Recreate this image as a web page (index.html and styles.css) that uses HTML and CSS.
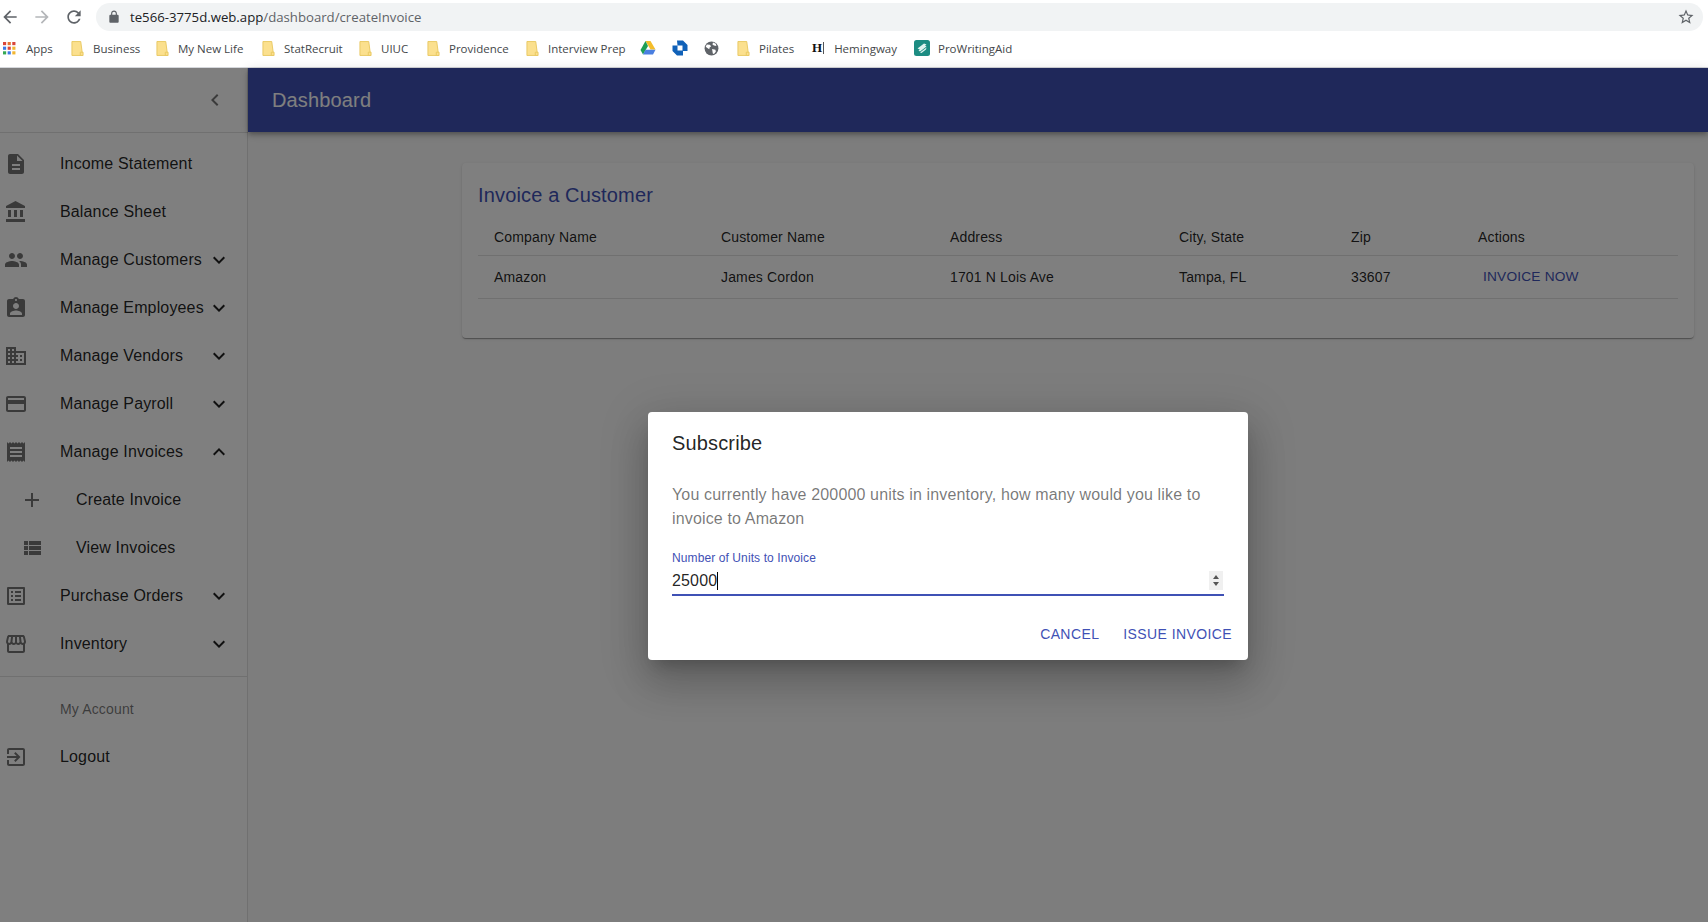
FILE: index.html
```html
<!DOCTYPE html>
<html lang="en">
<head>
    <meta charset="UTF-8">
    <title>Dashboard</title>
    <link rel="stylesheet" href="styles.css">
</head>
<body>
    <svg class="sprite" xmlns="http://www.w3.org/2000/svg">
        <symbol id="i-back" viewBox="0 0 24 24"><path d="M20 11H7.83l5.59-5.59L12 4l-8 8 8 8 1.41-1.41L7.83 13H20v-2z"/></symbol>
        <symbol id="i-forward" viewBox="0 0 24 24"><path d="M12 4l-1.41 1.41L16.17 11H4v2h12.17l-5.58 5.59L12 20l8-8z"/></symbol>
        <symbol id="i-reload" viewBox="0 0 24 24"><path d="M17.65 6.35C16.2 4.9 14.21 4 12 4c-4.42 0-7.99 3.58-7.99 8s3.57 8 7.99 8c3.73 0 6.84-2.55 7.73-6h-2.08c-.82 2.33-3.04 4-5.65 4-3.31 0-6-2.69-6-6s2.69-6 6-6c1.66 0 3.14.69 4.22 1.78L13 11h7V4l-2.35 2.35z"/></symbol>
        <symbol id="i-lock" viewBox="0 0 24 24"><path d="M18 8h-1V6c0-2.76-2.24-5-5-5S7 3.24 7 6v2H6c-1.1 0-2 .9-2 2v10c0 1.1.9 2 2 2h12c1.1 0 2-.9 2-2V10c0-1.1-.9-2-2-2zM9 6c0-1.66 1.34-3 3-3s3 1.34 3 3v2H9V6z"/></symbol>
        <symbol id="i-star" viewBox="0 0 24 24"><path d="M22 9.24l-7.19-.62L12 2 9.19 8.63 2 9.24l5.46 4.73L5.82 21 12 17.27 18.18 21l-1.63-7.03L22 9.24zM12 15.4l-3.76 2.27 1-4.28-3.32-2.88 4.38-.38L12 6.1l1.71 4.04 4.38.38-3.32 2.88 1 4.28L12 15.4z"/></symbol>
        <symbol id="i-folder" viewBox="0 0 14 18"><path d="M1 1.5h9.5L12.5 16.5H1z" fill="#fbe08e" stroke="#e8c860"/><path d="M10 13h3v3.5h-3z" fill="#fbe08e" stroke="#e8c860"/></symbol>
        <symbol id="i-statement" viewBox="0 0 24 24"><path d="M14 2H6c-1.1 0-1.99.9-1.99 2L4 20c0 1.1.89 2 1.99 2H18c1.1 0 2-.9 2-2V8l-6-6zm2 16H8v-2h8v2zm0-4H8v-2h8v2zm-3-5V3.5L18.5 9H13z"/></symbol>
        <symbol id="i-bank" viewBox="0 0 24 24"><path d="M4 10v7h3v-7H4zm6 0v7h3v-7h-3zM2 22h19v-3H2v3zm14-12v7h3v-7h-3zm-4.5-9L2 6v2h19V6l-9.5-5z"/></symbol>
        <symbol id="i-people" viewBox="0 0 24 24"><path d="M16 11c1.66 0 2.99-1.34 2.99-3S17.66 5 16 5c-1.66 0-3 1.34-3 3s1.34 3 3 3zm-8 0c1.66 0 2.99-1.34 2.99-3S9.66 5 8 5C6.34 5 5 6.34 5 8s1.34 3 3 3zm0 2c-2.33 0-7 1.17-7 3.5V19h14v-2.5c0-2.33-4.67-3.5-7-3.5zm8 0c-.29 0-.62.02-.97.05 1.16.84 1.97 1.97 1.97 3.45V19h6v-2.5c0-2.33-4.67-3.5-7-3.5z"/></symbol>
        <symbol id="i-badge" viewBox="0 0 24 24"><path d="M19 3h-4.18C14.4 1.84 13.3 1 12 1c-1.3 0-2.4.84-2.82 2H5c-1.1 0-2 .9-2 2v14c0 1.1.9 2 2 2h14c1.1 0 2-.9 2-2V5c0-1.1-.9-2-2-2zm-7 0c.55 0 1 .45 1 1s-.45 1-1 1-1-.45-1-1 .45-1 1-1zm0 4c1.66 0 3 1.34 3 3s-1.34 3-3 3-3-1.34-3-3 1.34-3 3-3zm6 12H6v-1.4c0-2 4-3.1 6-3.1s6 1.1 6 3.1V19z"/></symbol>
        <symbol id="i-business" viewBox="0 0 24 24"><path d="M12 7V3H2v18h20V7H12zM6 19H4v-2h2v2zm0-4H4v-2h2v2zm0-4H4V9h2v2zm0-4H4V5h2v2zm4 12H8v-2h2v2zm0-4H8v-2h2v2zm0-4H8V9h2v2zm0-4H8V5h2v2zm10 12h-8v-2h2v-2h-2v-2h2v-2h-2V9h8v10zm-2-8h-2v2h2v-2zm0 4h-2v2h2v-2z"/></symbol>
        <symbol id="i-card" viewBox="0 0 24 24"><path d="M20 4H4c-1.11 0-1.99.89-1.99 2L2 18c0 1.11.89 2 2 2h16c1.11 0 2-.89 2-2V6c0-1.11-.89-2-2-2zm0 14H4v-6h16v6zm0-10H4V6h16v2z"/></symbol>
        <symbol id="i-receipt" viewBox="0 0 24 24"><path d="M18 17H6v-2h12v2zm0-4H6v-2h12v2zm0-4H6V7h12v2zM3 22l1.5-1.5L6 22l1.5-1.5L9 22l1.5-1.5L12 22l1.5-1.5L15 22l1.5-1.5L18 22l1.5-1.5L21 22V2l-1.5 1.5L18 2l-1.5 1.5L15 2l-1.5 1.5L12 2l-1.5 1.5L9 2 7.5 3.5 6 2 4.5 3.5 3 2v20z"/></symbol>
        <symbol id="i-add" viewBox="0 0 24 24"><path d="M19 13h-6v6h-2v-6H5v-2h6V5h2v6h6v2z"/></symbol>
        <symbol id="i-viewlist" viewBox="0 0 24 24"><path d="M4 14h4v-4H4v4zm0 5h4v-4H4v4zM4 9h4V5H4v4zm5 5h12v-4H9v4zm0 5h12v-4H9v4zM9 5v4h12V5H9z"/></symbol>
        <symbol id="i-listalt" viewBox="0 0 24 24"><path d="M19 5v14H5V5h14m1.1-2H3.9c-.5 0-.9.4-.9.9v16.2c0 .4.4.9.9.9h16.2c.4 0 .9-.5.9-.9V3.9c0-.5-.5-.9-.9-.9zM11 7h6v2h-6V7zm0 4h6v2h-6v-2zm0 4h6v2h-6zM7 7h2v2H7zm0 4h2v2H7zm0 4h2v2H7z"/></symbol>
        <symbol id="i-store" viewBox="0 0 24 24"><path d="M21.9 8.89l-1.05-4.37c-.22-.9-1-1.52-1.91-1.52H5.05c-.9 0-1.69.63-1.9 1.52L2.1 8.89c-.24 1.02-.02 2.06.62 2.88.08.11.19.19.28.29V19c0 1.1.9 2 2 2h14c1.1 0 2-.9 2-2v-6.94c.09-.09.2-.18.28-.28.64-.82.87-1.87.62-2.89zm-2.99-3.9l1.05 4.37c.1.42.01.84-.25 1.17-.14.18-.44.47-.94.47-.61 0-1.14-.49-1.21-1.14L16.98 5l1.93-.01zM13 5h1.96l.54 4.52c.05.39-.07.78-.33 1.07-.22.26-.54.41-.95.41-.67 0-1.22-.59-1.22-1.31V5zM8.49 9.52L9.04 5H11v4.69c0 .72-.55 1.31-1.29 1.31-.34 0-.65-.15-.89-.41-.25-.29-.37-.68-.33-1.07zm-4.45-.16L5.05 5h1.97l-.58 4.86c-.08.65-.6 1.14-1.21 1.14-.49 0-.8-.29-.93-.47-.27-.32-.36-.75-.26-1.17zM5 19v-6.03c.08.01.15.03.23.03.87 0 1.66-.36 2.24-.95.6.6 1.4.95 2.31.95.87 0 1.65-.36 2.23-.93.59.57 1.39.93 2.29.93.84 0 1.64-.35 2.24-.95.58.59 1.37.95 2.24.95.08 0 .15-.02.23-.03V19H5z"/></symbol>
        <symbol id="i-exit" viewBox="0 0 24 24"><path d="M10.09 15.59L11.5 17l5-5-5-5-1.41 1.41L12.67 11H3v2h9.67l-2.58 2.59zM19 3H5c-1.11 0-2 .9-2 2v4h2V5h14v14H5v-4H3v4c0 1.1.89 2 2 2h14c1.1 0 2-.9 2-2V5c0-1.1-.9-2-2-2z"/></symbol>
        <symbol id="i-more" viewBox="0 0 24 24"><path d="M16.59 8.59L12 13.17 7.41 8.59 6 10l6 6 6-6z"/></symbol>
        <symbol id="i-less" viewBox="0 0 24 24"><path d="M12 8l-6 6 1.41 1.41L12 10.83l4.59 4.58L18 14z"/></symbol>
        <symbol id="i-left" viewBox="0 0 24 24"><path d="M15.41 7.41L14 6l-6 6 6 6 1.41-1.41L10.83 12z"/></symbol>
    </svg>

    <div class="browser">
        <div class="addressrow">
            <svg class="nav-icon"><use href="#i-back"/></svg>
            <svg class="nav-icon faded"><use href="#i-forward"/></svg>
            <svg class="nav-icon"><use href="#i-reload"/></svg>
            <div class="omnibox">
                <svg class="lock"><use href="#i-lock"/></svg>
                <span class="url">te566-3775d.web.app<span class="url-path">/dashboard/createInvoice</span></span>
                <svg class="star"><use href="#i-star"/></svg>
            </div>
        </div>
        <div class="bookmarks">
            <span class="bm apps">
                <svg class="apps-grid" viewBox="0 0 14 14">
                    <rect x="0" y="0" width="3.4" height="3.4" fill="#d9453a"/><rect x="5" y="0" width="3.4" height="3.4" fill="#e5732f"/><rect x="10" y="0" width="3.4" height="3.4" fill="#d9453a"/>
                    <rect x="0" y="5" width="3.4" height="3.4" fill="#3b78e7"/><rect x="5" y="5" width="3.4" height="3.4" fill="#d9453a"/><rect x="10" y="5" width="3.4" height="3.4" fill="#f2b632"/>
                    <rect x="0" y="10" width="3.4" height="3.4" fill="#34a853"/><rect x="5" y="10" width="3.4" height="3.4" fill="#3b78e7"/><rect x="10" y="10" width="3.4" height="3.4" fill="#f2b632"/>
                </svg>Apps</span>
            <span class="bm w-business"><svg class="folder"><use href="#i-folder"/></svg>Business</span>
            <span class="bm w-life"><svg class="folder"><use href="#i-folder"/></svg>My New Life</span>
            <span class="bm w-stat"><svg class="folder"><use href="#i-folder"/></svg>StatRecruit</span>
            <span class="bm w-uiuc"><svg class="folder"><use href="#i-folder"/></svg>UIUC</span>
            <span class="bm w-prov"><svg class="folder"><use href="#i-folder"/></svg>Providence</span>
            <span class="bm w-prep"><svg class="folder"><use href="#i-folder"/></svg>Interview Prep</span>
            <svg class="favicon" viewBox="0 0 16 16"><path d="M5.5 1h5l5 8.5h-5z" fill="#f4bd2a"/><path d="M5.5 1L.5 10l2.5 4.5L8 6z" fill="#1e9e54"/><path d="M5.5 9.8h10L13 14.5H3z" fill="#4a7fe0"/></svg>
            <svg class="favicon" viewBox="0 0 16 16"><path d="M5 .5h6L15.5 5v6H10.5V5.5H5.5zM.5 5.5H5.5V10.5H11V15.5H5L.5 11z" fill="#1061b8"/></svg>
            <svg class="favicon globe" viewBox="0 0 16 16"><circle cx="8" cy="8" r="7.4" fill="#5f6368"/><path d="M3 3.6l3.2.4 1.4 1.6-1.6 1.4-.4 1.8L3.2 7.2 1.8 6.2zM9.6 1.6l3 1.4.6 2.4-2.6-.6-1.6-1.2zM8.6 8.6l3.6.6.4 2.2-2 2.4-1.2-.4-.4-2.6z" fill="#fff"/></svg>
            <span class="bm w-pilates"><svg class="folder"><use href="#i-folder"/></svg>Pilates</span>
            <span class="bm w-hem"><span class="h-mark">H</span><span class="h-bar"></span>Hemingway</span>
            <span class="bm w-pwa"><svg class="pwa" viewBox="0 0 16 16"><rect width="16" height="16" rx="2.5" fill="#1c8c82"/><path d="M3.5 8.5L10 3.5l2.5 1-6.5 5zM4.5 10.5L11 5.5l1.5 1-6.5 5zM6 12.5l6.5-5-.5 2-4.5 3.5z" fill="#dff3ef"/></svg>ProWritingAid</span>
        </div>
    </div>

    <div class="app">
        <nav class="sidebar">
            <div class="sidebar-top">
                <svg class="collapse"><use href="#i-left"/></svg>
            </div>
            <ul class="menu">
                <li class="menu-item"><svg class="menu-icon"><use href="#i-statement"/></svg>Income Statement</li>
                <li class="menu-item"><svg class="menu-icon"><use href="#i-bank"/></svg>Balance Sheet</li>
                <li class="menu-item"><svg class="menu-icon"><use href="#i-people"/></svg>Manage Customers<svg class="caret"><use href="#i-more"/></svg></li>
                <li class="menu-item"><svg class="menu-icon"><use href="#i-badge"/></svg>Manage Employees<svg class="caret"><use href="#i-more"/></svg></li>
                <li class="menu-item"><svg class="menu-icon"><use href="#i-business"/></svg>Manage Vendors<svg class="caret"><use href="#i-more"/></svg></li>
                <li class="menu-item"><svg class="menu-icon"><use href="#i-card"/></svg>Manage Payroll<svg class="caret"><use href="#i-more"/></svg></li>
                <li class="menu-item"><svg class="menu-icon"><use href="#i-receipt"/></svg>Manage Invoices<svg class="caret"><use href="#i-less"/></svg></li>
                <li class="menu-item nested"><svg class="menu-icon"><use href="#i-add"/></svg>Create Invoice</li>
                <li class="menu-item nested"><svg class="menu-icon"><use href="#i-viewlist"/></svg>View Invoices</li>
                <li class="menu-item"><svg class="menu-icon"><use href="#i-listalt"/></svg>Purchase Orders<svg class="caret"><use href="#i-more"/></svg></li>
                <li class="menu-item"><svg class="menu-icon"><use href="#i-store"/></svg>Inventory<svg class="caret"><use href="#i-more"/></svg></li>
            </ul>
            <div class="menu-divider"></div>
            <div class="menu-heading">My Account</div>
            <ul class="menu">
                <li class="menu-item"><svg class="menu-icon"><use href="#i-exit"/></svg>Logout</li>
            </ul>
        </nav>
        <div class="content">
            <header class="appbar">Dashboard</header>
            <main class="main">
                <section class="card">
                    <h2 class="card-title">Invoice a Customer</h2>
                    <table class="invoice-table">
                        <thead>
                            <tr>
                                <th class="col-company">Company Name</th>
                                <th class="col-customer">Customer Name</th>
                                <th class="col-address">Address</th>
                                <th class="col-city">City, State</th>
                                <th class="col-zip">Zip</th>
                                <th>Actions</th>
                            </tr>
                        </thead>
                        <tbody>
                            <tr>
                                <td>Amazon</td>
                                <td>James Cordon</td>
                                <td>1701 N Lois Ave</td>
                                <td>Tampa, FL</td>
                                <td>33607</td>
                                <td><a class="invoice-link">INVOICE NOW</a></td>
                            </tr>
                        </tbody>
                    </table>
                </section>
            </main>
        </div>

        <div class="backdrop"></div>
        <div class="dialog">
            <h2 class="dialog-title">Subscribe</h2>
            <p class="dialog-text">You currently have 200000 units in inventory, how many would you like to invoice to Amazon</p>
            <label class="field-label">Number of Units to Invoice</label>
            <div class="field">
                <span class="field-value">25000</span><span class="text-caret"></span>
                <span class="spinner"><i class="spin-up"></i><i class="spin-down"></i></span>
            </div>
            <div class="dialog-actions">
                <a class="dialog-btn">CANCEL</a>
                <a class="dialog-btn">ISSUE INVOICE</a>
            </div>
        </div>
    </div>
</body>
</html>
```

FILE: styles.css
```css
* {
    box-sizing: border-box;
}

html, body {
    height: 100%;
}

body {
    margin: 0;
    display: flex;
    flex-direction: column;
    font-family: 'Liberation Sans', Arial, sans-serif;
    letter-spacing: 0.15px;
    color: rgba(0, 0, 0, 0.87);
    background: #fafafa;
    overflow: hidden;
}

.sprite {
    display: none;
}

/* browser chrome */
.browser {
    height: 68px;
    background: #fff;
    border-bottom: 1px solid #d5d7db;
    letter-spacing: normal;
    flex: none;
}

.addressrow {
    height: 33px;
    padding: 3px 5px 0 0;
    display: flex;
    align-items: flex-start;
}

.nav-icon {
    width: 20px;
    height: 20px;
    margin: 4px 0 0 0;
    fill: #5f6368;
    flex: none;
}

.nav-icon:nth-child(2) {
    margin-left: 12px;
}

.nav-icon:nth-child(3) {
    margin-left: 12px;
    margin-right: 12px;
}

.nav-icon.faded {
    fill: #b4b6b9;
}

.omnibox {
    flex: 1;
    height: 28px;
    border-radius: 14px;
    background: #f1f3f4;
    display: flex;
    align-items: center;
    padding: 0 8px 0 11px;
}

.lock {
    width: 14px;
    height: 14px;
    fill: #5f6368;
    margin-right: 9px;
}

.url {
    font-family: 'Open Sans', sans-serif;
    font-size: 13.2px;
    color: #202124;
    flex: 1;
}

.url-path {
    color: #5f6368;
}

.star {
    width: 18px;
    height: 18px;
    fill: #5f6368;
}

.bookmarks {
    height: 30px;
    display: flex;
    align-items: center;
    font-family: 'Open Sans', sans-serif;
    font-size: 11.5px;
    color: #44474a;
    padding-left: 3px;
}

.bm {
    display: flex;
    align-items: center;
    flex: none;
}

.apps-grid {
    width: 13px;
    height: 13px;
    margin-right: 10px;
}

.apps {
    width: 68px;
}

.folder {
    width: 13px;
    height: 17px;
    margin-right: 9px;
}

.w-business { width: 85px; }
.w-life { width: 106px; }
.w-stat { width: 97px; }
.w-uiuc { width: 68px; }
.w-prov { width: 99px; }
.w-prep { width: 114px; }

.favicon {
    width: 16px;
    height: 16px;
    margin-right: 16px;
    flex: none;
}

.favicon.globe {
    width: 15px;
    height: 15px;
    margin-right: 18px;
}

.w-pilates { width: 75px; }
.w-hem { width: 102px; }

.h-mark {
    font-family: 'Liberation Serif', serif;
    font-weight: bold;
    font-size: 13px;
    color: #111;
}

.h-bar {
    width: 1px;
    height: 12px;
    background: #555;
    margin: 0 10px 0 1px;
}

.pwa {
    width: 16px;
    height: 16px;
    margin-right: 8px;
}

/* app */
.app {
    flex: 1;
    position: relative;
    display: flex;
    min-height: 0;
}

.sidebar {
    width: 248px;
    flex: none;
    background: #fff;
    border-right: 1px solid rgba(0, 0, 0, 0.12);
}

.sidebar-top {
    height: 65px;
    border-bottom: 1px solid rgba(0, 0, 0, 0.12);
    display: flex;
    align-items: center;
    justify-content: flex-end;
    padding-right: 21px;
    margin-right: -1px;
}

.collapse {
    width: 24px;
    height: 24px;
    fill: rgba(0, 0, 0, 0.54);
}

.menu {
    list-style: none;
    margin: 0;
    padding: 7px 0 0;
}

.menu-item {
    height: 48px;
    display: flex;
    align-items: center;
    padding-left: 4px;
    font-size: 16px;
    position: relative;
}

.menu-icon {
    width: 24px;
    height: 24px;
    margin-right: 32px;
    fill: rgba(0, 0, 0, 0.54);
    flex: none;
}

.menu-item.nested {
    padding-left: 20px;
}

.caret {
    width: 24px;
    height: 24px;
    fill: rgba(0, 0, 0, 0.87);
    margin-left: auto;
    margin-right: 16px;
}

.menu-divider {
    height: 1px;
    background: rgba(0, 0, 0, 0.12);
    margin-top: 8px;
}

.menu-heading {
    height: 48px;
    margin-top: 8px;
    padding-left: 60px;
    font-size: 14px;
    line-height: 48px;
    color: rgba(0, 0, 0, 0.54);
}

.sidebar .menu-heading + .menu {
    padding-top: 0;
}

.content {
    flex: 1;
    min-width: 0;
    display: flex;
    flex-direction: column;
}

.appbar {
    height: 64px;
    background: #3f51b5;
    color: #fff;
    font-size: 20px;
    line-height: 64px;
    padding-left: 24px;
    box-shadow: 0 2px 4px -1px rgba(0, 0, 0, 0.2), 0 4px 5px 0 rgba(0, 0, 0, 0.14), 0 1px 10px 0 rgba(0, 0, 0, 0.12);
    flex: none;
}

.main {
    flex: 1;
    padding: 31px 14px 0 214px;
}

.card {
    height: 175px;
    background: #fff;
    border-radius: 4px;
    padding: 16px;
    box-shadow: 0 2px 1px -1px rgba(0, 0, 0, 0.2), 0 1px 1px 0 rgba(0, 0, 0, 0.14), 0 1px 3px 0 rgba(0, 0, 0, 0.12);
}

.card-title {
    margin: 0;
    font-size: 20px;
    font-weight: 400;
    line-height: 33px;
    color: #3f51b5;
}

.invoice-table {
    width: 100%;
    border-collapse: collapse;
    table-layout: fixed;
    margin-top: 7px;
    font-size: 14px;
}

.invoice-table th,
.invoice-table td {
    text-align: left;
    font-weight: 400;
    padding: 0 0 0 16px;
    border-bottom: 1px solid rgba(0, 0, 0, 0.12);
}

.invoice-table th {
    height: 36px;
}

.invoice-table td {
    height: 43px;
}

.col-company { width: 227px; }
.col-customer { width: 229px; }
.col-address { width: 229px; }
.col-city { width: 172px; }
.col-zip { width: 127px; }

.invoice-link {
    color: #3f51b5;
    margin-left: 5px;
    font-size: 13.7px;
    letter-spacing: 0.2px;
    position: relative;
    top: -1px;
}

/* dialog */
.backdrop {
    position: absolute;
    inset: 0;
    background: rgba(0, 0, 0, 0.5);
}

.dialog {
    position: absolute;
    left: 648px;
    top: 344px;
    width: 600px;
    height: 248px;
    background: #fff;
    border-radius: 4px;
    padding: 16px 24px 0;
    box-shadow: 0 11px 15px -7px rgba(0, 0, 0, 0.2), 0 24px 38px 3px rgba(0, 0, 0, 0.14), 0 9px 46px 8px rgba(0, 0, 0, 0.12);
}

.dialog-title {
    margin: 0;
    font-size: 20px;
    font-weight: 400;
    line-height: 31px;
}

.dialog-text {
    margin: 24px 0 0;
    font-size: 16px;
    line-height: 24px;
    color: rgba(0, 0, 0, 0.54);
}

.field-label {
    display: block;
    margin-top: 20px;
    font-size: 12px;
    letter-spacing: 0.1px;
    line-height: 14px;
    color: #3f51b5;
}

.field {
    height: 29px;
    margin-top: 2px;
    border-bottom: 2px solid #3f51b5;
    display: flex;
    align-items: center;
    font-size: 16px;
    position: relative;
}

.text-caret {
    width: 1px;
    height: 18px;
    background: #000;
}

.spinner {
    margin-left: auto;
    margin-right: 1px;
    width: 14px;
    height: 19px;
    background: #f0f0f0;
    display: flex;
    flex-direction: column;
    align-items: center;
    justify-content: center;
    gap: 3px;
}

.spin-up {
    border: 3.5px solid transparent;
    border-top: 0;
    border-bottom: 4px solid #555;
}

.spin-down {
    border: 3.5px solid transparent;
    border-bottom: 0;
    border-top: 4px solid #555;
}

.dialog-actions {
    display: flex;
    justify-content: flex-end;
    gap: 24px;
    margin-top: 28px;
    margin-right: -8px;
    font-size: 14px;
    color: #3f51b5;
}

.dialog-btn {
    letter-spacing: 0.4px;
    line-height: 20px;
}
```
